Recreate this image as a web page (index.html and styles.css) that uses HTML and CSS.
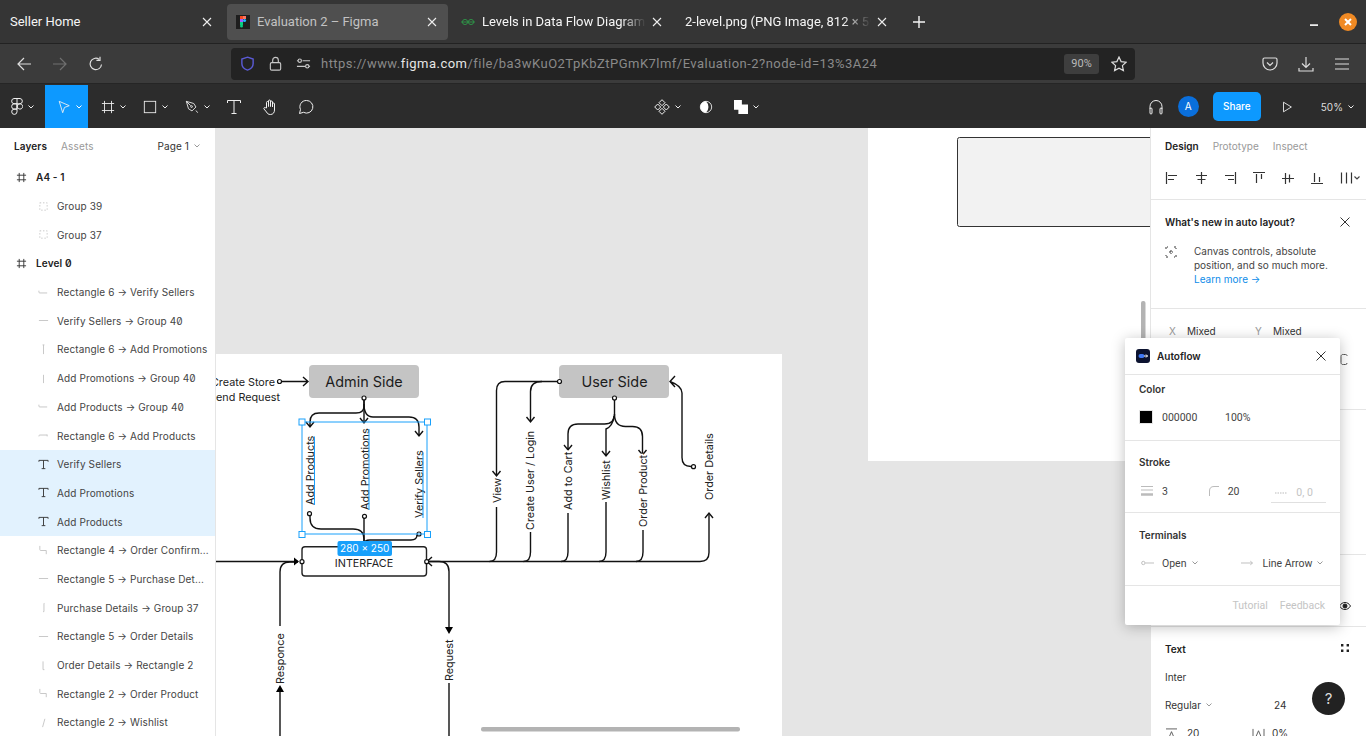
FILE: index.html
```html
<!DOCTYPE html>
<html lang="en">
<head>
    <meta charset="UTF-8">
    <meta name="viewport" content="width=device-width, initial-scale=1.0">
    <title>Evaluation 2 – Figma</title>
    <link rel="stylesheet" href="styles.css">
</head>
<body>
    <!-- browser chrome -->
    <div class="tabbar">
        <div class="tab">
            <span class="tab-title">Seller Home</span>
            <svg class="tab-close" viewBox="0 0 10 10"><path d="M1 1l8 8M9 1l-8 8"/></svg>
        </div>
        <div class="tab active">
            <svg class="favicon" viewBox="0 0 14 14"><rect width="14" height="14" fill="#1e1e1e"/><rect x="4" y="1" width="3" height="3" fill="#f24e1e"/><rect x="7" y="1" width="3" height="3" fill="#ff7262"/><rect x="4" y="4" width="3" height="3" fill="#a259ff"/><circle cx="8.5" cy="5.5" r="1.6" fill="#1abcfe"/><rect x="4" y="7" width="3" height="3" fill="#0acf83"/><circle cx="5.5" cy="11" r="1.5" fill="#0acf83"/></svg>
            <span class="tab-title dim">Evaluation 2 – Figma</span>
            <svg class="tab-close" viewBox="0 0 10 10"><path d="M1 1l8 8M9 1l-8 8"/></svg>
        </div>
        <div class="tab">
            <svg class="favicon" viewBox="0 0 14 14"><g fill="none" stroke="#2f8d46" stroke-width="1"><path d="M0 7h14"/><circle cx="4" cy="7" r="2.600"/><circle cx="10" cy="7" r="2.600"/></g></svg>
            <span class="tab-title fade">Levels in Data Flow Diagrams (DFD)</span>
            <svg class="tab-close" viewBox="0 0 10 10"><path d="M1 1l8 8M9 1l-8 8"/></svg>
        </div>
        <div class="tab">
            <span class="tab-title fade">2-level.png (PNG Image, 812 × 590 pixels)</span>
            <svg class="tab-close" viewBox="0 0 10 10"><path d="M1 1l8 8M9 1l-8 8"/></svg>
        </div>
        <svg class="new-tab" viewBox="0 0 14 14"><path d="M7 1v12M1 7h12"/></svg>
        <svg class="win-min" viewBox="0 0 10 3"><rect width="10" height="2" fill="#fff"/></svg>
        <div class="win-close"><svg viewBox="0 0 10 10"><path d="M2 2l6 6M8 2l-6 6"/></svg></div>
    </div>

    <div class="navbar">
        <svg class="nav-icon first" viewBox="0 0 16 16"><path d="M15 8H2M8 2L2 8l6 6"/></svg>
        <svg class="nav-icon off" viewBox="0 0 16 16"><path d="M1 8h13M8 2l6 6-6 6"/></svg>
        <svg class="nav-icon" viewBox="0 0 16 16"><path d="M13.5 8.5A5.7 5.7 0 1 1 11 3.2M12 .8v3.6H8.4"/></svg>
        <div class="urlbar">
            <svg class="url-icon shield" viewBox="0 0 16 16"><path d="M8 1.2l6 2v5c0 3.500-3 5.800-6 6.800-3-1-6-3.300-6-6.800v-5z"/></svg>
            <svg class="url-icon" viewBox="0 0 16 16"><rect x="2.500" y="7" width="11" height="8" rx="1.500"/><path d="M5 7V4.500a3 3 0 0 1 6 0V7"/></svg>
            <svg class="url-icon" viewBox="0 0 16 16"><path d="M1 11h9M14 11h1M7 5h8M1 5h1"/><circle cx="4" cy="5" r="1.800"/><circle cx="12" cy="11" r="1.800"/></svg>
            <span class="url-text">https://www.<b>figma.com</b>/file/ba3wKuO2TpKbZtPGmK7lmf/Evaluation-2?node-id=13%3A24</span>
            <span class="zoom-pill">90%</span>
            <svg class="url-icon star" viewBox="0 0 16 16"><path d="M8 1l2.100 4.600 5 .6-3.700 3.400 1 4.900L8 12.100l-4.400 2.400 1-4.900L.9 6.200l5-.6z"/></svg>
        </div>
        <svg class="nav-icon pocket" viewBox="0 0 16 16"><path d="M2.500 2h11A1.500 1.500 0 0 1 15 3.500V7A7 7 0 0 1 1 7V3.500A1.500 1.500 0 0 1 2.500 2zM5 6.500l3 3 3-3"/></svg>
        <svg class="nav-icon" viewBox="0 0 16 16"><path d="M8 1v10M4 7.500l4 4 4-4M1 12v3h14v-3"/></svg>
        <svg class="nav-icon" viewBox="0 0 16 16"><path d="M1 3h14M1 8h14M1 13h14"/></svg>
    </div>

    <!-- figma toolbar -->
    <div class="toolbar">
        <div class="tool-group tools-left">
            <div class="tool logo">
                <svg class="tool-icon logo-mark" viewBox="0 0 12 17"><path d="M3 .5h6a2.670 2.670 0 0 1 0 5.300H3A2.670 2.670 0 0 1 3 .5zM6 .5v10.600M3 5.800h3v5.300H3a2.670 2.670 0 0 1 0-5.300zM9 5.800a2.650 2.650 0 1 1-.01 0zM3 11.100h3v2.700a2.650 2.650 0 1 1-3-2.700z"/></svg>
                <svg class="chev" viewBox="0 0 6 4"><path d="M.5.500L3 3 5.500.500"/></svg>
            </div>
            <div class="tool move">
                <svg class="tool-icon" viewBox="0 0 16 16"><path d="M2.500 1.500L14 6.500 8.500 8.500 6.500 14.500z"/></svg>
                <svg class="chev" viewBox="0 0 6 4"><path d="M.5.500L3 3 5.500.500"/></svg>
            </div>
            <div class="tool frame">
                <svg class="tool-icon" viewBox="0 0 16 16"><path d="M4 1v14M12 1v14M1 4h14M1 12h14"/></svg>
                <svg class="chev" viewBox="0 0 6 4"><path d="M.5.500L3 3 5.500.500"/></svg>
            </div>
            <div class="tool frame">
                <svg class="tool-icon" viewBox="0 0 16 16"><rect x="1.500" y="1.500" width="13" height="13"/></svg>
                <svg class="chev" viewBox="0 0 6 4"><path d="M.5.500L3 3 5.500.500"/></svg>
            </div>
            <div class="tool pen">
                <svg class="tool-icon" viewBox="0 0 16 16"><path d="M1.500 1.500l8.500 2.500 2.500 4-4.500 4.500-4-2.500zM1.500 1.500l5 5M12.500 12l2 2.500"/><circle cx="7.500" cy="7.500" r="1"/></svg>
                <svg class="chev" viewBox="0 0 6 4"><path d="M.5.500L3 3 5.500.500"/></svg>
            </div>
            <div class="tool single">
                <svg class="tool-icon" viewBox="0 0 16 16"><path d="M1.500 4V1.500h13V4M8 1.500v13M5.500 14.500h5"/></svg>
            </div>
            <div class="tool single">
                <svg class="tool-icon hand" viewBox="0 0 16 16"><path d="M4.500 9V3.500a1 1 0 0 1 2 0V7.500V2a1 1 0 0 1 2 0v5.500V3a1 1 0 0 1 2 0v5V5a1 1 0 0 1 2 0v6c0 2.500-1.500 4.500-4 4.500-2.200 0-3.200-1-4-2.500L2 10c-.6-1 .7-2 1.500-1.300z"/></svg>
            </div>
            <div class="tool single">
                <svg class="tool-icon" viewBox="0 0 16 16"><path d="M8.500 1.500a6.300 6.300 0 1 1-3 11.800L1.500 14.500l1-4A6.300 6.300 0 0 1 8.500 1.500z"/></svg>
            </div>
        </div>
        <div class="tool-group tools-center">
            <div class="tool comp">
                <svg class="tool-icon" viewBox="0 0 16 16"><path d="M8 .7l3 3-3 3-3-3zM8 9.300l3 3-3 3-3-3zM3.700 5l3 3-3 3-3-3zM12.300 5l3 3-3 3-3-3z"/></svg>
                <svg class="chev" viewBox="0 0 6 4"><path d="M.5.500L3 3 5.500.500"/></svg>
            </div>
            <div class="tool mask">
                <svg class="tool-icon" viewBox="0 0 16 16"><circle cx="8" cy="8" r="6.500"/><path class="solid" d="M8 1.500a6.500 6.500 0 0 0 0 13 9 9 0 0 0 0-13z"/></svg>
            </div>
            <div class="tool fill">
                <svg class="tool-icon" viewBox="0 0 16 16"><path class="solid" d="M0 0h9v5h7v11H5v-5H0z"/></svg>
                <svg class="chev" viewBox="0 0 6 4"><path d="M.5.500L3 3 5.500.500"/></svg>
            </div>
        </div>
        <div class="tool-group tools-right">
            <svg class="tool-icon phones" viewBox="0 0 16 16"><path d="M2 10V7.500a6 6 0 0 1 12 0V10M2 10a1 1 0 0 1 2 0v4a1 1 0 0 1-2 0zM12 10a1 1 0 0 1 2 0v4a1 1 0 0 1-2 0z"/></svg>
            <span class="avatar">A</span>
            <span class="share">Share</span>
            <svg class="tool-icon play" viewBox="0 0 16 16"><path d="M4 2.500L13 8l-9 5.500z"/></svg>
            <span class="zoom-val">50%</span>
            <svg class="chev" viewBox="0 0 6 4"><path d="M.5.500L3 3 5.500.500"/></svg>
        </div>
    </div>

    <div class="main">
        <!-- layers panel -->
        <aside class="layers">
            <div class="layers-head">
                <span class="tab-on">Layers</span>
                <span class="tab-off">Assets</span>
                <span class="page">Page 1</span>
                <svg class="chev gray" viewBox="0 0 6 4"><path d="M.5.500L3 3 5.500.500"/></svg>
            </div>
            <div class="row top"><svg class="row-icon dark" viewBox="0 0 12 12"><path d="M3.500 1v10M8.500 1v10M1 3.500h10M1 8.500h10"/></svg><b>A4 - 1</b></div>
            <div class="row"><svg class="row-icon" viewBox="0 0 12 12"><path stroke-dasharray="1.500 2" d="M2 2h8v8H2z"/></svg>Group 39</div>
            <div class="row"><svg class="row-icon" viewBox="0 0 12 12"><path stroke-dasharray="1.500 2" d="M2 2h8v8H2z"/></svg>Group 37</div>
            <div class="row top"><svg class="row-icon dark" viewBox="0 0 12 12"><path d="M3.500 1v10M8.500 1v10M1 3.500h10M1 8.500h10"/></svg><b>Level 0</b></div>
            <div class="row"><svg class="row-icon" viewBox="0 0 12 12"><path d="M1 4v1.500q0 1 1 1h8"/></svg>Rectangle 6 → Verify Sellers</div>
            <div class="row"><svg class="row-icon" viewBox="0 0 12 12"><path d="M1 6h10"/></svg>Verify Sellers → Group 40</div>
            <div class="row"><svg class="row-icon" viewBox="0 0 12 12"><path d="M6 1v10M5 1h2"/></svg>Rectangle 6 → Add Promotions</div>
            <div class="row"><svg class="row-icon" viewBox="0 0 12 12"><path d="M6 2v9"/></svg>Add Promotions → Group 40</div>
            <div class="row"><svg class="row-icon" viewBox="0 0 12 12"><path d="M1 4v1.500q0 1 1 1h8"/></svg>Add Products → Group 40</div>
            <div class="row"><svg class="row-icon" viewBox="0 0 12 12"><path d="M1 7V6.500q0-1 1-1h8M10 5v2"/></svg>Rectangle 6 → Add Products</div>
            <div class="row selected"><svg class="row-icon text-icon" viewBox="0 0 12 12"><path d="M1 3V1.500h10V3M6 1.500v9M4 10.500h4"/></svg>Verify Sellers</div>
            <div class="row selected"><svg class="row-icon text-icon" viewBox="0 0 12 12"><path d="M1 3V1.500h10V3M6 1.500v9M4 10.500h4"/></svg>Add Promotions</div>
            <div class="row selected"><svg class="row-icon text-icon" viewBox="0 0 12 12"><path d="M1 3V1.500h10V3M6 1.500v9M4 10.500h4"/></svg>Add Products</div>
            <div class="row"><svg class="row-icon" viewBox="0 0 12 12"><path d="M2 1v4q0 1 1 1h6v4"/></svg>Rectangle 4 → Order Confirm...</div>
            <div class="row"><svg class="row-icon" viewBox="0 0 12 12"><path d="M1 6h10"/></svg>Rectangle 5 → Purchase Det...</div>
            <div class="row"><svg class="row-icon" viewBox="0 0 12 12"><path d="M7 1.500H6.500V10.500H5.500"/></svg>Purchase Details → Group 37</div>
            <div class="row"><svg class="row-icon" viewBox="0 0 12 12"><path d="M1 6h10"/></svg>Rectangle 5 → Order Details</div>
            <div class="row"><svg class="row-icon" viewBox="0 0 12 12"><path d="M5.500 1.500v9H7"/></svg>Order Details → Rectangle 2</div>
            <div class="row"><svg class="row-icon" viewBox="0 0 12 12"><path d="M2 1v4q0 1 1 1h6v4"/></svg>Rectangle 2 → Order Product</div>
            <div class="row"><svg class="row-icon" viewBox="0 0 12 12"><path d="M7.500 2L5 11"/></svg>Rectangle 2 → Wishlist</div>
        </aside>

        <!-- canvas, drawn in page coordinates -->
        <div class="canvas">
            <svg class="board" viewBox="216 128 934 608">
                <rect x="868" y="128" width="282" height="333" fill="#fff"/>
                <rect x="957.500" y="137.500" width="200" height="89" rx="2" fill="#f2f2f2" stroke="#333"/>
                <rect x="216" y="354" width="566" height="382" fill="#fff"/>

                <g class="wire">
                    <!-- admin -->
                    <path d="M281 381.500H308M303 377l5 4.500-5 4.500"/>
                    <path d="M364 399v7q0 7-8 7H319q-9 0-9 9v5M306 422l4 5 4-5"/>
                    <path d="M364 399v24M360 418l4 5 4-5"/>
                    <path d="M364 404q0 13 9 13h36q10 0 10 10v9M415 431l4 5 4-5"/>
                    <path d="M310 515v3q0 11 11 11h32q11 0 11 10v8"/>
                    <path d="M364 518v29"/>
                    <path d="M417 535q0 5-6 5h-41q-6 0-6 4"/>
                    <!-- interface left/right -->
                    <path d="M216 561.500H298"/>
                    <path d="M280 626V572q0-10 10-10h8"/>
                    <path d="M280 692v44"/>
                    <path d="M449 683v53"/>
                    <path d="M428 561.500h11q10 0 10 10V628"/>
                    <path d="M428 561.500H700q9 0 9-9V513"/>
                    <path d="M705 518l4-5 4 5"/>
                    <path d="M432 557l-5 4.500 5 4.500"/>
                    <!-- user side -->
                    <path d="M558 381.500H505q-8.500 0-8.500 9V476M492.500 471l4 5 4-5"/>
                    <path d="M496.500 507v45q0 9.500-7 9.500"/>
                    <path d="M542 381.500q-11.500 0-11.500 10V422M526.500 417l4 5 4-5"/>
                    <path d="M530.500 532v20q0 9.500-7 9.500"/>
                    <path d="M614.500 399v15q0 10-10 10H578q-10 0-10 10V450M564 445l4 5 4-5"/>
                    <path d="M568 513v39q0 9.500-7 9.500"/>
                    <path d="M614 416q-1 10-8 13V456M602 451l4 5 4-5"/>
                    <path d="M606 502v50q0 9.500-7 9.500"/>
                    <path d="M614.500 414q0 12.500 11 12.500h7q10 0 10 10V455M638.500 450l4 5 4-5"/>
                    <path d="M643 530v22q0 9.500-7 9.500"/>
                    <path d="M691 466.500q-9 0-9-9V393q0-7-12-11.500M675 376l-5 5.500 5 5.500"/>
                </g>
                <path class="solid" d="M280 685l-4 7h8zM449 634l-4-7h8zM299 561.500l-5-4v8z"/>

                <rect class="node" x="309" y="365" width="110" height="33" rx="4"/>
                <rect class="node" x="559" y="365" width="110" height="33" rx="4"/>
                <text class="big" x="364" y="386.500">Admin Side</text>
                <text class="big" x="614.500" y="386.500">User Side</text>

                <rect class="box" x="302" y="546.700" width="124.500" height="29.300" rx="3"/>
                <text class="lbl mid" x="364" y="567">INTERFACE</text>

                <g class="lbl">
                    <text class="end" x="275" y="385.500">Create Store</text>
                    <text class="end" x="280" y="401">Send Request</text>
                    <text transform="translate(314 505) rotate(-90)">Add Products</text>
                    <text transform="translate(369 510) rotate(-90)">Add Promotions</text>
                    <text transform="translate(423 518) rotate(-90)">Verify Sellers</text>
                    <text transform="translate(500.500 503) rotate(-90)">View</text>
                    <text transform="translate(534 530) rotate(-90)">Create User / Login</text>
                    <text transform="translate(572 510) rotate(-90)">Add to Cart</text>
                    <text transform="translate(609.500 500) rotate(-90)">Wishlist</text>
                    <text transform="translate(647 527) rotate(-90)">Order Product</text>
                    <text transform="translate(713 500) rotate(-90)">Order Details</text>
                    <text transform="translate(284 684) rotate(-90)">Responce</text>
                    <text transform="translate(453 681) rotate(-90)">Request</text>
                </g>

                <circle class="dot" cx="279.500" cy="381.500" r="2"/>
                <circle class="dot" cx="364" cy="398" r="2"/>
                <circle class="dot" cx="309.500" cy="513.700" r="2"/>
                <circle class="dot" cx="364.500" cy="516.300" r="2"/>
                <circle class="dot" cx="419" cy="534" r="2"/>
                <circle class="dot" cx="302" cy="561.700" r="2"/>
                <circle class="dot" cx="426.700" cy="561.700" r="2"/>
                <circle class="dot" cx="559.500" cy="381.500" r="2"/>
                <circle class="dot" cx="614.500" cy="398" r="2"/>
                <circle class="dot" cx="693.500" cy="466.700" r="2"/>

                <!-- selection -->
                <g class="sel">
                    <path d="M302 422H427V534H302zM314.500 436.500V505M369 429V510M423 452.500V518"/>
                    <rect x="299" y="419" width="6" height="6"/>
                    <rect x="424.500" y="419" width="6" height="6"/>
                    <rect x="299" y="531.500" width="6" height="6"/>
                    <rect x="424.500" y="531.500" width="6" height="6"/>
                </g>
                <rect class="size-tag" x="337.500" y="541" width="54.500" height="15" rx="2"/>
                <text class="size-text" x="364.700" y="552">280 × 250</text>

                <rect class="scroll" x="481" y="727" width="259" height="4.500" rx="2"/>
                <rect class="scroll" x="1141" y="301" width="4.500" height="45" rx="2"/>
            </svg>
        </div>

        <!-- design panel -->
        <aside class="design">
            <section class="sec sec-top">
                <div class="design-tabs">
                    <span class="tab-on">Design</span>
                    <span class="tab-off">Prototype</span>
                    <span class="tab-off">Inspect</span>
                </div>
                <div class="aligns">
                    <svg viewBox="0 0 14 14"><path d="M1.500 1v12M3 4.500h9M3 8.500h6"/></svg>
                    <svg viewBox="0 0 14 14"><path d="M7.500 1v12M2 4.500h11M3.500 8.500h8"/></svg>
                    <svg viewBox="0 0 14 14"><path d="M12.500 1v12M2 4.500h9M5 8.500h6"/></svg>
                    <svg viewBox="0 0 14 14"><path d="M1 1.500h12M4.500 3v9M9.500 3v5"/></svg>
                    <svg viewBox="0 0 14 14"><path d="M1 7.500h12M4.500 2v11M8.500 3.500v8"/></svg>
                    <svg viewBox="0 0 14 14"><path d="M1 12.500h12M4.500 2v9M9.500 6v5"/></svg>
                    <span class="dist"><svg viewBox="0 0 14 14"><path d="M2.500 1.500v11M7.500 1.500v11M12.500 1.500v11"/></svg><svg class="chev dark-chev" viewBox="0 0 6 4"><path d="M.5.500L3 3 5.500.500"/></svg></span>
                </div>
            </section>
            <section class="sec sec-news">
                <div class="news-head"><b>What's new in auto layout?</b><svg class="x-icon" viewBox="0 0 10 10"><path d="M.5.500l9 9M9.500.500l-9 9"/></svg></div>
                <div class="news-body">
                    <svg class="news-icon" viewBox="0 0 12 12"><path d="M1 3V1h2M9 1h2v2M11 9v2H9M3 11H1V9M6 4v4M4 6h4"/></svg>
                    <p>Canvas controls, absolute position, and so much more.<br><a>Learn more →</a></p>
                </div>
            </section>
            <section class="sec sec-pos">
                <div class="pos-row"><i>X</i><span>Mixed</span><i class="y">Y</i><span>Mixed</span></div>
                <svg class="corner" viewBox="0 0 8 12"><path d="M7 2.500V2a1.500 1.500 0 0 0-1.500-1h-2A2 2 0 0 0 1 3v6a2 2 0 0 0 2.500 2h2A1.500 1.500 0 0 0 7 9.500"/></svg>
            </section>
            <section class="sec sec-mid"></section>
            <section class="sec sec-eye">
                <svg class="eye" viewBox="0 0 12 8"><path d="M.5 4C2 1.500 4 .5 6 .5S10 1.500 11.500 4C10 6.500 8 7.500 6 7.500S2 6.500.5 4z"/><circle cx="6" cy="4" r="2"/></svg>
            </section>
            <section class="sec-text">
                <div class="text-head"><b>Text</b>
                    <svg viewBox="0 0 10 10"><path class="solid" d="M1 1h2.400v2.400H1zM6.600 1H9v2.400H6.600zM1 6.600h2.400V9H1zM6.600 6.600H9V9H6.600z"/></svg>
                </div>
                <div class="text-row">Inter</div>
                <div class="text-row">Regular<svg class="chev gray" viewBox="0 0 6 4"><path d="M.5.500L3 3 5.500.500"/></svg><span class="size">24</span></div>
                <div class="text-row last">
                    <svg class="lh" viewBox="0 0 14 12"><path d="M1 1h12M4 11l3-7 3 7"/></svg><span class="lh-val">20</span>
                    <svg class="ls" viewBox="0 0 14 12"><path d="M1 1v10M13 1v10M4 10l3-7 3 7"/></svg><span>0%</span>
                </div>
            </section>
        </aside>

        <!-- autoflow plugin window -->
        <div class="plugin">
            <div class="plugin-head">
                <svg class="plugin-logo" viewBox="0 0 14 14"><rect width="14" height="14" rx="3" fill="#0c1330"/><rect x="2.500" y="5" width="6" height="4" rx="2" fill="#3f78f5"/><path d="M8 7h3.500M10 5.500L11.500 7 10 8.500" stroke="#fff" fill="none"/></svg>
                <b>Autoflow</b>
                <svg class="x-icon" viewBox="0 0 10 10"><path d="M.5.500l9 9M9.500.500l-9 9"/></svg>
            </div>
            <div class="plugin-sec color">
                <h4>Color</h4>
                <div class="plugin-row"><span class="swatch"></span><span class="hex">000000</span><span>100%</span></div>
            </div>
            <div class="plugin-sec stroke">
                <h4>Stroke</h4>
                <div class="plugin-row">
                    <svg class="p-icon" viewBox="0 0 12 12"><path d="M0 1.500h12M0 5h12" stroke-width="1"/><path d="M0 9.500h12" stroke-width="2.500"/></svg>
                    <span class="w-val">3</span>
                    <svg class="p-icon" viewBox="0 0 12 12"><path d="M1.500 11V6q0-4.500 4.500-4.500h5"/></svg>
                    <span class="r-val">20</span>
                    <span class="dash"><svg viewBox="0 0 12 4"><path stroke-dasharray="1.500 1" d="M0 2h12"/></svg>0, 0</span>
                </div>
            </div>
            <div class="plugin-sec term">
                <h4>Terminals</h4>
                <div class="plugin-row">
                    <svg class="p-icon wide" viewBox="0 0 14 6"><circle cx="2.500" cy="3" r="1.800"/><path d="M4.500 3H14"/></svg>
                    <span class="t-a">Open</span><svg class="chev gray" viewBox="0 0 6 4"><path d="M.5.500L3 3 5.500.500"/></svg>
                    <svg class="p-icon wide t-arrow" viewBox="0 0 14 6"><path d="M0 3h12M10 1l2.500 2-2.500 2"/></svg>
                    <span class="t-b">Line Arrow</span><svg class="chev gray" viewBox="0 0 6 4"><path d="M.5.500L3 3 5.500.500"/></svg>
                </div>
            </div>
            <div class="plugin-foot"><span>Tutorial</span><span>Feedback</span></div>
        </div>

        <div class="help">?</div>
    </div>
</body>
</html>
```

FILE: styles.css
```css
html, body {
    margin: 0;
    height: 100%;
}
body {
    width: 1366px;
    height: 736px;
    overflow: hidden;
    display: flex;
    flex-direction: column;
    font-family: Inter, "Liberation Sans", sans-serif;
    font-size: 10px;
    color: #333;
    background: #e5e5e5;
}
svg {
    display: block;
    flex: none;
}

/* browser chrome */
.tabbar {
    height: 43px;
    flex: none;
    display: flex;
    align-items: center;
    background: #353535;
    border-bottom: 1px solid #222;
    font-family: Roboto, sans-serif;
    font-size: 13px;
    color: #f5f5f5;
}
.tab {
    width: 221px;
    height: 36px;
    margin: 0 2px;
    padding: 0 11px 0 8px;
    box-sizing: border-box;
    display: flex;
    align-items: center;
    border-radius: 4px;
    flex: none;
}
.tab.active {
    background: #4f4f4f;
    padding-left: 9px;
}
.tab .favicon {
    width: 14px;
    height: 14px;
    margin-right: 7px;
}
.tab:nth-child(3) {
    padding-left: 9px;
}
.tab-title {
    flex: 1;
    white-space: nowrap;
    overflow: hidden;
}
.tab-title.dim {
    color: #c2c2c2;
}
.tab-title.fade {
    -webkit-mask-image: linear-gradient(to right, #000 85%, transparent 100%);
    mask-image: linear-gradient(to right, #000 85%, transparent 100%);
}
.tab-close {
    width: 10px;
    height: 10px;
    margin-left: 6px;
    fill: none;
    stroke: #eee;
    stroke-width: 1.1;
}
.new-tab {
    width: 14px;
    height: 14px;
    margin-left: 12px;
    fill: none;
    stroke: #f5f5f5;
    stroke-width: 1.400;
}
.win-min {
    width: 8px;
    height: 3px;
    margin: 8px 0 0 384px;
}
.win-close {
    width: 18px;
    height: 18px;
    border-radius: 50%;
    background: #f08a24;
    margin-left: 21px;
    display: flex;
    align-items: center;
    justify-content: center;
}
.win-close svg {
    width: 10px;
    height: 10px;
    fill: none;
    stroke: #fff;
    stroke-width: 2;
}

.navbar {
    height: 40px;
    flex: none;
    display: flex;
    align-items: center;
    background: #3b3b3b;
    border-bottom: 1px solid #252525;
    box-sizing: border-box;
}
.nav-icon {
    width: 16px;
    height: 16px;
    margin-left: 20px;
    fill: none;
    stroke: #ddd;
    stroke-width: 1.200;
}
.nav-icon.first {
    margin-left: 16px;
}
.nav-icon.off {
    stroke: #707070;
}
.urlbar {
    width: 904px;
    height: 32px;
    margin-left: 127px;
    background: #232323;
    border-radius: 4px;
    display: flex;
    align-items: center;
    box-sizing: border-box;
    padding-left: 9px;
    font-family: Roboto, sans-serif;
    font-size: 13px;
    color: #8a8a8a;
}
.url-icon {
    width: 15px;
    height: 15px;
    margin-right: 13px;
    fill: none;
    stroke: #c8c8c8;
    stroke-width: 1.200;
}
.url-icon.shield {
    stroke: #5b5bd6;
    stroke-width: 1.500;
}
.url-text {
    flex: 1;
    white-space: nowrap;
    overflow: hidden;
    margin-left: -3px;
    letter-spacing: .47px;
}
.url-text b {
    font-weight: 400;
    color: #e6e6e6;
}
.zoom-pill {
    width: 35px;
    height: 20px;
    background: #3e3e3e;
    border-radius: 3px;
    font-size: 11px;
    line-height: 20px;
    text-align: center;
    color: #bbb;
    margin-right: 12px;
}
.url-icon.star {
    width: 16px;
    height: 16px;
    margin-right: 8px;
    stroke: #ddd;
}
.nav-icon.pocket {
    margin-left: 127px;
}

/* figma toolbar */
.toolbar {
    height: 44px;
    flex: none;
    display: flex;
    align-items: stretch;
    background: #2c2c2c;
    border-top: 1px solid #2c2c2c;
    box-sizing: border-box;
    color: #fff;
}
.tool-group {
    display: flex;
    align-items: center;
}
.tools-left {
    width: 650px;
    align-items: stretch;
}
.tools-center {
    width: 125px;
    align-items: stretch;
}
.tools-right {
    flex: 1;
    justify-content: flex-end;
    padding-right: 12px;
}
.tool {
    display: flex;
    align-items: center;
    box-sizing: border-box;
}
.tool-icon {
    width: 14px;
    height: 14px;
    fill: none;
    stroke: #f0f0f0;
    stroke-width: 1;
}
.tool-icon .solid, .solid {
    fill: #fff;
    stroke: none;
}
.chev {
    width: 6px;
    height: 4px;
    fill: none;
    stroke: #eee;
    stroke-width: 1;
    margin-left: 5px;
}
.chev.gray {
    stroke: #999;
}
.chev.dark-chev {
    stroke: #444;
}
.tool.logo {
    width: 45px;
    padding-left: 11px;
}
.tool-icon.logo-mark {
    width: 12px;
    height: 17px;
}
.tool.move {
    width: 43px;
    padding-left: 12px;
    background: #0d99ff;
}
.tool.move .chev {
    stroke: #fff;
}
.tool.frame {
    width: 42px;
    padding-left: 13px;
}
.tool.pen {
    width: 44px;
    padding-left: 13px;
}
.tool.single {
    width: 36px;
    justify-content: center;
}
.tool.single .tool-icon {
    width: 16px;
    height: 16px;
}
.tool.comp {
    width: 49px;
    padding-left: 4px;
}
.tool.comp .tool-icon {
    width: 16px;
    height: 16px;
}
.tool.mask {
    width: 28px;
    padding-left: 0;
}
.tool.fill {
    width: 48px;
    padding-left: 7px;
}
.phones {
    width: 16px;
    height: 16px;
}
.avatar {
    width: 21px;
    height: 21px;
    border-radius: 50%;
    background: #0a6fdc;
    font-size: 10px;
    line-height: 21px;
    text-align: center;
    margin-left: 14px;
}
.share {
    width: 48px;
    height: 29px;
    background: #0d99ff;
    border-radius: 5px;
    font-size: 10px;
    font-weight: 500;
    line-height: 29px;
    text-align: center;
    margin-left: 14px;
}
.tool-icon.play {
    margin-left: 19px;
}
.zoom-val {
    margin-left: 27px;
    font-size: 10px;
    color: #ddd;
}

.main {
    flex: 1;
    min-height: 0;
    display: flex;
    position: relative;
}

/* layers */
.layers {
    width: 216px;
    flex: none;
    box-sizing: border-box;
    background: #fff;
    border-right: 1px solid #e5e5e5;
    font-feature-settings: "zero";
    letter-spacing: .13px;
    overflow: hidden;
    position: relative;
    z-index: 2;
}
.layers-head {
    height: 35px;
    display: flex;
    align-items: center;
    padding: 1px 15px 0 14px;
    box-sizing: border-box;
}
.tab-on {
    font-weight: 600;
    color: #222;
}
.tab-off {
    color: #999;
    margin-left: 14px;
}
.page {
    margin-left: auto;
    color: #333;
}
.row {
    height: 28.700px;
    display: flex;
    align-items: center;
    padding-left: 38px;
    white-space: nowrap;
    color: #444;
}
.row b {
    font-weight: 600;
    color: #222;
}
.row.top {
    padding-left: 16px;
}
.row.selected {
    background: #e2f2fe;
}
.row-icon {
    width: 11px;
    height: 11px;
    margin-right: 8px;
    fill: none;
    stroke: #c4c4c4;
    stroke-width: 1;
}
.row.top .row-icon {
    margin-right: 9px;
}
.row-icon.dark, .row-icon.text-icon {
    stroke: #333;
}

/* canvas */
.canvas {
    flex: 1;
    min-width: 0;
    background: #e5e5e5;
}
.board {
    width: 934px;
    height: 608px;
    font-family: Inter, "Liberation Sans", sans-serif;
}
.wire path {
    fill: none;
    stroke: #111;
    stroke-width: 1.400;
}
.board .solid {
    fill: #000;
}
.node {
    fill: #c4c4c4;
}
.box {
    fill: #fff;
    stroke: #222;
    stroke-width: 1.400;
}
.big {
    font-size: 14.400px;
    text-anchor: middle;
    fill: #1c1c1c;
}
.lbl text, .lbl {
    font-size: 10.800px;
    fill: #222;
}
.lbl text {
    stroke: #fff;
    stroke-width: 3px;
    paint-order: stroke;
}
.mid {
    text-anchor: middle;
}
.end {
    text-anchor: end;
}
.dot {
    fill: #fff;
    stroke: #111;
    stroke-width: 1.200;
}
.sel path {
    fill: none;
    stroke: #18a0fb;
    stroke-width: 1;
}
.sel rect {
    fill: #fff;
    stroke: #18a0fb;
    stroke-width: 1;
}
.size-tag {
    fill: #18a0fb;
}
.size-text {
    fill: #fff;
    font-size: 10px;
    text-anchor: middle;
}
.scroll {
    fill: #b3b3b3;
}

/* design panel */
.design {
    width: 216px;
    flex: none;
    box-sizing: border-box;
    background: #fff;
    border-left: 1px solid #e5e5e5;
    overflow: hidden;
    display: flex;
    flex-direction: column;
    color: #333;
    position: relative;
}
.sec {
    flex: none;
    box-sizing: border-box;
    border-bottom: 1px solid #e5e5e5;
    padding-left: 14px;
}
.sec-top {
    height: 72px;
}
.design-tabs {
    height: 36px;
    display: flex;
    align-items: center;
}
.design-tabs .tab-off {
    margin-left: 14px;
}
.aligns {
    display: flex;
    align-items: center;
    height: 28px;
}
.aligns svg {
    width: 14px;
    height: 14px;
    margin-right: 15px;
    fill: none;
    stroke: #333;
    stroke-width: 1.200;
}
.aligns .dist {
    display: flex;
    align-items: center;
}
.aligns .dist svg {
    margin-right: 0;
}
.aligns .dist .chev {
    width: 6px;
    height: 4px;
    margin-left: 1px;
    stroke: #444;
}
.sec-news {
    height: 109px;
    padding-right: 16px;
}
.news-head {
    height: 44px;
    display: flex;
    align-items: center;
    justify-content: space-between;
}
.news-head b {
    font-weight: 600;
    color: #222;
}
.x-icon {
    width: 10px;
    height: 10px;
    fill: none;
    stroke: #333;
    stroke-width: 1;
}
.news-body {
    display: flex;
}
.news-icon {
    width: 12px;
    height: 12px;
    margin: 2px 17px 0 0;
    fill: none;
    stroke: #333;
    stroke-width: 1;
    stroke-dasharray: 2 1;
}
.news-body p {
    margin: 0;
    line-height: 14px;
    color: #444;
}
.news-body a {
    color: #0d8ce9;
}
.sec-pos {
    height: 101px;
    padding-top: 15px;
    position: relative;
    padding-left: 18px;
}
.pos-row {
    display: flex;
    align-items: center;
    height: 14px;
}
.pos-row i {
    font-style: normal;
    color: #999;
    width: 18px;
}
.pos-row .y {
    margin-left: 41px;
}
.pos-row span {
    width: 27px;
}
.corner {
    position: absolute;
    right: 18px;
    top: 44px;
    width: 8px;
    height: 13px;
    fill: none;
    stroke: #555;
    stroke-width: 1;
}
.sec-mid {
    height: 145px;
}
.sec-eye {
    height: 72px;
    display: flex;
    align-items: center;
    justify-content: flex-end;
    padding-right: 15px;
    padding-top: 30px;
}
.eye {
    width: 12px;
    height: 8px;
    fill: none;
    stroke: #222;
    stroke-width: 1;
}
.eye circle {
    fill: #222;
}
.sec-text {
    padding-left: 14px;
    padding-right: 16px;
}
.text-head {
    height: 44px;
    margin-bottom: -8px;
    display: flex;
    align-items: center;
    justify-content: space-between;
}
.text-head b {
    font-weight: 600;
    color: #222;
}
.text-head svg {
    width: 10px;
    height: 10px;
    margin-top: -2px;
}
.text-head .solid {
    fill: #222;
}
.text-row {
    height: 28px;
    flex: none;
    display: flex;
    align-items: center;
}
.text-row .size {
    margin-left: 62px;
}
.text-row.last .lh {
    width: 13px;
    height: 11px;
    fill: none;
    stroke: #555;
    margin-right: 9px;
}
.text-row.last .ls {
    width: 13px;
    height: 11px;
    fill: none;
    stroke: #555;
    margin: 0 7px 0 54px;
}
.text-row.last .lh-val {
    width: 11px;
}

/* plugin window */
.plugin {
    position: absolute;
    left: 1125px;
    top: 210px;
    width: 215px;
    height: 287px;
    background: #fff;
    border-radius: 2px;
    box-shadow: 0 2px 14px rgba(0, 0, 0, .25);
    z-index: 3;
    display: flex;
    flex-direction: column;
    color: #444;
    font-family: Roboto, Inter, sans-serif;
    font-size: 10.500px;
}
.plugin-head {
    height: 37px;
    flex: none;
    box-sizing: border-box;
    border-bottom: 1px solid #e5e5e5;
    display: flex;
    align-items: center;
    padding: 0 14px 0 11px;
    font-family: Inter, sans-serif;
    font-size: 10px;
}
.plugin-logo {
    width: 14px;
    height: 14px;
    margin-right: 7px;
}
.plugin-head b {
    flex: 1;
    font-weight: 600;
    color: #222;
}
.plugin-sec {
    flex: none;
    box-sizing: border-box;
    border-bottom: 1px solid #e5e5e5;
    padding: 0 14px;
}
.plugin-sec h4 {
    margin: 0;
    font-family: Inter, sans-serif;
    font-size: 10px;
    font-weight: 600;
    color: #333;
}
.plugin-sec.color {
    height: 66px;
    padding-top: 8px;
}
.plugin-sec.stroke {
    height: 72px;
    padding-top: 15px;
}
.plugin-sec.term {
    height: 73px;
    padding-top: 16px;
}
.plugin-row {
    display: flex;
    align-items: center;
    height: 14px;
    margin-top: 15px;
    padding-left: 2px;
}
.plugin-sec.color .plugin-row {
    padding-left: 0;
}
.plugin-sec.stroke .plugin-row {
    margin-top: 16px;
}
.plugin-sec.term .plugin-row {
    margin-top: 15px;
}
.swatch {
    width: 12px;
    height: 12px;
    background: #000;
    margin: 0 10px 0 1px;
    outline: 1px solid #e5e5e5;
}
.hex {
    width: 63px;
}
.p-icon {
    width: 12px;
    height: 12px;
    fill: none;
    stroke: #bbb;
    stroke-width: 1;
}
.p-icon.wide {
    width: 13px;
    height: 6px;
}
.w-val {
    margin-left: 9px;
    width: 46px;
}
.r-val {
    margin-left: 8px;
    width: 44px;
}
.dash {
    width: 55px;
    height: 20px;
    margin-top: 4px;
    display: flex;
    align-items: center;
    color: #c4c4c4;
    border-bottom: 1px solid #e0e0e0;
    box-sizing: border-box;
    padding-left: 3px;
}
.dash svg {
    width: 14px;
    height: 4px;
    margin-right: 8px;
    fill: none;
    stroke: #bbb;
}
.t-a {
    margin-left: 8px;
}
.t-arrow {
    margin-left: 43px;
}
.t-b {
    margin-left: 9px;
}
.plugin-foot {
    flex: 1;
    display: flex;
    align-items: center;
    justify-content: flex-end;
    padding-right: 15px;
    color: #c4c4c4;
    gap: 12px;
}

.help {
    position: absolute;
    left: 1312px;
    top: 554px;
    width: 33px;
    height: 33px;
    border-radius: 50%;
    background: #222;
    color: #ddd;
    font-size: 15px;
    line-height: 33px;
    text-align: center;
    z-index: 4;
}
```
